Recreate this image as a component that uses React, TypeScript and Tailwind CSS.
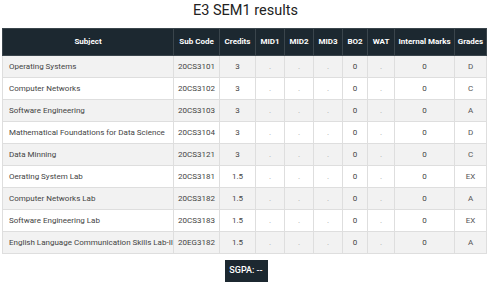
import React from "react";

type Row = { subject: string; code: string; credits: string; grade: string };

const rows: Row[] = [
  { subject: "Operating Systems", code: "20CS3101", credits: "3", grade: "D" },
  { subject: "Computer Networks", code: "20CS3102", credits: "3", grade: "C" },
  { subject: "Software Engineering", code: "20CS3103", credits: "3", grade: "A" },
  { subject: "Mathematical Foundations for Data Science", code: "20CS3104", credits: "3", grade: "D" },
  { subject: "Data Minning", code: "20CS3121", credits: "3", grade: "C" },
  { subject: "Oerating System Lab", code: "20CS3181", credits: "1.5", grade: "EX" },
  { subject: "Computer Networks Lab", code: "20CS3182", credits: "1.5", grade: "A" },
  { subject: "Software Engineering Lab", code: "20CS3183", credits: "1.5", grade: "EX" },
  { subject: "English Language Communication Skills Lab-II", code: "20EG3182", credits: "1.5", grade: "A" },
];

const heads = ["Subject", "Sub Code", "Credits", "MID1", "MID2", "MID3", "BO2", "WAT", "Internal Marks", "Grades"];
const widths = ["w-[171px]", "w-[46px]", "w-[36px]", "w-[29px]", "w-[29px]", "w-[29px]", "w-[25px]", "w-[27px]", "w-[60px]", "w-[32px]"];

export default function App() {
  return (
    <div className="w-[491px] h-[283px] bg-white font-['Roboto',sans-serif] text-[#444]">
      <h1 className="text-center text-[14.5px] leading-[20px] pt-[1px] h-[28px] font-normal text-[#222]">E3 SEM1 results</h1>

      <div className="pl-[2px]">
        <table className="table-fixed border-collapse w-[484px] text-[8px]">
          <colgroup>
            {widths.map((w, i) => (
              <col key={i} className={w} />
            ))}
          </colgroup>
          <thead>
            <tr className="bg-[#1c2830] text-white h-[27px]">
              {heads.map((h) => (
                <th key={h} className="border border-[#3a454c] font-bold text-center px-0 whitespace-nowrap">
                  {h}
                </th>
              ))}
            </tr>
          </thead>
          <tbody>
            {rows.map((r, i) => (
              <tr key={r.code} className={`h-[22px] ${i % 2 === 0 ? "bg-[#f2f2f2]" : "bg-white"}`}>
                <td className="border border-[#dedede] pl-[6px] text-left whitespace-nowrap overflow-hidden">{r.subject}</td>
                <td className="border border-[#dedede] text-center">{r.code}</td>
                <td className="border border-[#dedede] text-center">{r.credits}</td>
                <td className="border border-[#dedede] text-center text-[#aaa]">.</td>
                <td className="border border-[#dedede] text-center text-[#aaa]">.</td>
                <td className="border border-[#dedede] text-center text-[#aaa]">.</td>
                <td className="border border-[#dedede] text-center">0</td>
                <td className="border border-[#dedede] text-center text-[#aaa]">.</td>
                <td className="border border-[#dedede] text-center">0</td>
                <td className="border border-[#dedede] text-center text-[#555]">{r.grade}</td>
              </tr>
            ))}
          </tbody>
        </table>
      </div>

      <div className="flex justify-center pt-[6px] pl-[1px]">
        <div className="bg-[#1c2830] text-white text-[9px] font-medium h-[22px] w-[43px] flex items-center justify-center">
          SGPA: --
        </div>
      </div>
    </div>
  );
}
